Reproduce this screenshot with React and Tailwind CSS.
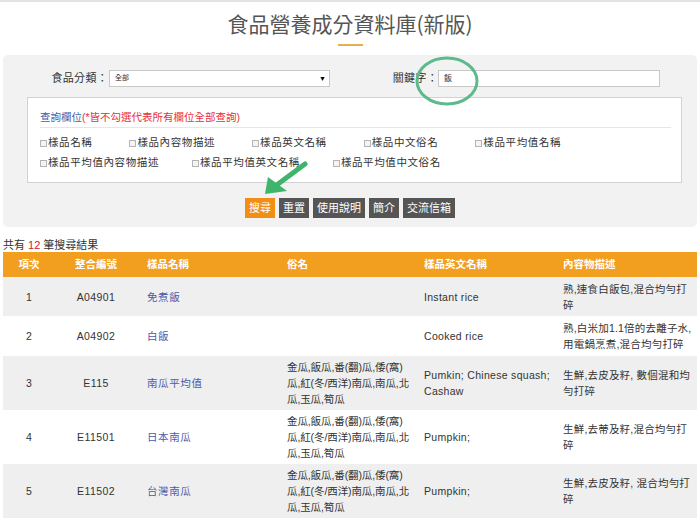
import React from "react";

const rows = [
  {
    no: "1",
    code: "A04901",
    name: "免煮飯",
    alias: [],
    en: ["Instant rice"],
    desc: ["熟,速食白飯包,混合均勻打", "碎"],
    h: "h-[39px]",
    bg: "bg-[#efefef]",
  },
  {
    no: "2",
    code: "A04902",
    name: "白飯",
    alias: [],
    en: ["Cooked rice"],
    desc: ["熟,白米加1.1倍的去離子水,", "用電鍋烹煮,混合均勻打碎"],
    h: "h-[40px]",
    bg: "bg-white",
  },
  {
    no: "3",
    code: "E115",
    name: "南瓜平均值",
    alias: ["金瓜,飯瓜,番(翻)瓜,倭(窩)", "瓜,紅(冬/西洋)南瓜,南瓜,北", "瓜,玉瓜,筍瓜"],
    en: ["Pumkin; Chinese squash;", "Cashaw"],
    desc: ["生鮮,去皮及籽, 數個混和均", "勻打碎"],
    h: "h-[54px]",
    bg: "bg-[#efefef]",
  },
  {
    no: "4",
    code: "E11501",
    name: "日本南瓜",
    alias: ["金瓜,飯瓜,番(翻)瓜,倭(窩)", "瓜,紅(冬/西洋)南瓜,南瓜,北", "瓜,玉瓜,筍瓜"],
    en: ["Pumpkin;"],
    desc: ["生鮮,去蒂及籽,混合均勻打", "碎"],
    h: "h-[54px]",
    bg: "bg-white",
  },
  {
    no: "5",
    code: "E11502",
    name: "台灣南瓜",
    alias: ["金瓜,飯瓜,番(翻)瓜,倭(窩)", "瓜,紅(冬/西洋)南瓜,南瓜,北", "瓜,玉瓜,筍瓜"],
    en: ["Pumpkin;"],
    desc: ["生鮮,去皮及籽, 混合均勻打", "碎"],
    h: "h-[54px]",
    bg: "bg-[#efefef]",
  },
];

function Check({ label }) {
  return (
    <span className="flex items-center whitespace-nowrap">
      <span className="mr-[1px] inline-block h-[7px] w-[7px] border border-[#b5b5b5] bg-[#f4f4f4]" />
      <span>{label}</span>
    </span>
  );
}

function Btn({ children, orange }) {
  return (
    <span
      className={
        "h-[20px] px-[4px] text-[11px] leading-[20px] text-white " +
        (orange ? "bg-[#f28e14]" : "bg-[#555555]")
      }
    >
      {children}
    </span>
  );
}

function Lines({ lines, className }) {
  return (
    <div className={className}>
      {lines.map((l, i) => (
        <div key={i} className="whitespace-nowrap">
          {l}
        </div>
      ))}
    </div>
  );
}

export default function App() {
  return (
    <div
      className="relative w-[700px] h-[518px] overflow-hidden bg-white text-[#333]"
      style={{ fontFamily: '"Liberation Sans", "Noto Sans CJK TC", sans-serif' }}
    >
      <div className="h-[2px] bg-[#e3e3e3]" />
      <h1
        className="pt-[7px] text-center text-[21px] leading-[28px] text-[#555]"
        style={{ fontFamily: '"Noto Sans CJK TC", sans-serif' }}
      >
        食品營養成分資料庫(新版)
      </h1>
      <div className="mx-auto mt-[7px] h-[2px] w-[25px] bg-[#e6b04c]" />

      {/* search panel */}
      <div className="mx-[3px] mt-[9px] rounded-[5px] bg-[#f2f2f2] pt-[15px] pb-[9px]">
        <div className="flex h-[17px] items-center text-[11px]">
          <span className="w-[105px] text-right tracking-[0.3px]">食品分類：</span>
          <div className="ml-[1px] flex h-[17px] w-[221px] items-center justify-between border border-[#c8c8c8] bg-white pl-[5px] pr-[3px]">
            <span className="text-[7px]">全部</span>
            <span className="text-[7px] leading-none text-black">▼</span>
          </div>
          <span className="w-[108px] text-right tracking-[0.3px]">關鍵字：</span>
          <div className="flex h-[17px] w-[222px] items-center border border-[#c8c8c8] bg-white pl-[5px]">
            <span className="text-[8px]">飯</span>
          </div>
        </div>

        <div className="ml-[24px] mt-[10px] h-[86px] w-[655px] border border-[#d2d2d2] bg-white pt-[11px]">
          <div className="mx-[12px] mr-[10px] border-b border-[#e6e6e6] pb-[2px] text-[10.5px] leading-[16px]">
            <span className="text-[#3f5fae]">查詢欄位</span>
            <span className="text-[#e8303a]">(*皆不勾選代表所有欄位全部查詢)</span>
          </div>
          <div className="mt-[5px] px-[12px] text-[10.5px] tracking-[0.6px]">
            <div className="flex h-[20px] items-center gap-[37px]">
              <Check label="樣品名稱" />
              <Check label="樣品內容物描述" />
              <Check label="樣品英文名稱" />
              <Check label="樣品中文俗名" />
              <Check label="樣品平均值名稱" />
            </div>
            <div className="flex h-[20px] items-center gap-[33px]">
              <Check label="樣品平均值內容物描述" />
              <Check label="樣品平均值英文名稱" />
              <Check label="樣品平均值中文俗名" />
            </div>
          </div>
        </div>

        <div className="mt-[15px] flex justify-center gap-[4px]">
          <Btn orange>搜尋</Btn>
          <Btn>重置</Btn>
          <Btn>使用說明</Btn>
          <Btn>簡介</Btn>
          <Btn>交流信箱</Btn>
        </div>
      </div>

      <div className="mt-[11px] px-[3px] text-[11px] leading-[14px]">
        共有 <span className="text-[#d0202a]">12</span> 筆搜尋結果
      </div>

      <table className="mx-[3px] w-[694px] table-fixed border-collapse">
        <colgroup>
          <col className="w-[52px]" />
          <col className="w-[82px]" />
          <col className="w-[140px]" />
          <col className="w-[137px]" />
          <col className="w-[139px]" />
          <col className="w-[144px]" />
        </colgroup>
        <thead>
          <tr className="h-[25px] bg-[#f29e1f] text-[10.5px] font-bold text-white">
            <th className="text-center font-bold">項次</th>
            <th className="text-center font-bold">整合編號</th>
            <th className="pl-[10px] text-left font-bold">樣品名稱</th>
            <th className="pl-[10px] text-left font-bold">俗名</th>
            <th className="pl-[10px] text-left font-bold">樣品英文名稱</th>
            <th className="pl-[10px] text-left font-bold">內容物描述</th>
          </tr>
        </thead>
        <tbody className="text-[10.5px] leading-[16px]">
          {rows.map((r) => (
            <tr key={r.no} className={r.h + " " + r.bg}>
              <td className="text-center tracking-[0.4px]">{r.no}</td>
              <td className="text-center tracking-[0.4px]">{r.code}</td>
              <td className="pl-[10px] tracking-[0.6px] text-[#4b5aa8]">{r.name}</td>
              <td className="pl-[10px]">
                <Lines lines={r.alias} className="tracking-[-0.1px]" />
              </td>
              <td className="pl-[10px]">
                <Lines lines={r.en} className="tracking-[0.3px]" />
              </td>
              <td className="pl-[10px]">
                <Lines lines={r.desc} className="tracking-[0.2px]" />
              </td>
            </tr>
          ))}
        </tbody>
      </table>

      {/* annotation: green circle around keyword */}
      <svg
        className="pointer-events-none absolute left-[412px] top-[53px]"
        width="72"
        height="56"
        viewBox="0 0 72 56"
      >
        <ellipse cx="35" cy="28" rx="30" ry="23" fill="none" stroke="#5cba8b" strokeWidth="3" />
      </svg>

      {/* annotation: green arrow pointing at search button */}
      <svg
        className="pointer-events-none absolute left-[260px] top-[160px]"
        width="52"
        height="40"
        viewBox="0 0 52 40"
      >
        <line x1="45" y1="4" x2="18" y2="24" stroke="#3fb46c" strokeWidth="5" strokeLinecap="round" />
        <polygon points="5,34 8,17 27,31" fill="#3fb46c" />
      </svg>
    </div>
  );
}
